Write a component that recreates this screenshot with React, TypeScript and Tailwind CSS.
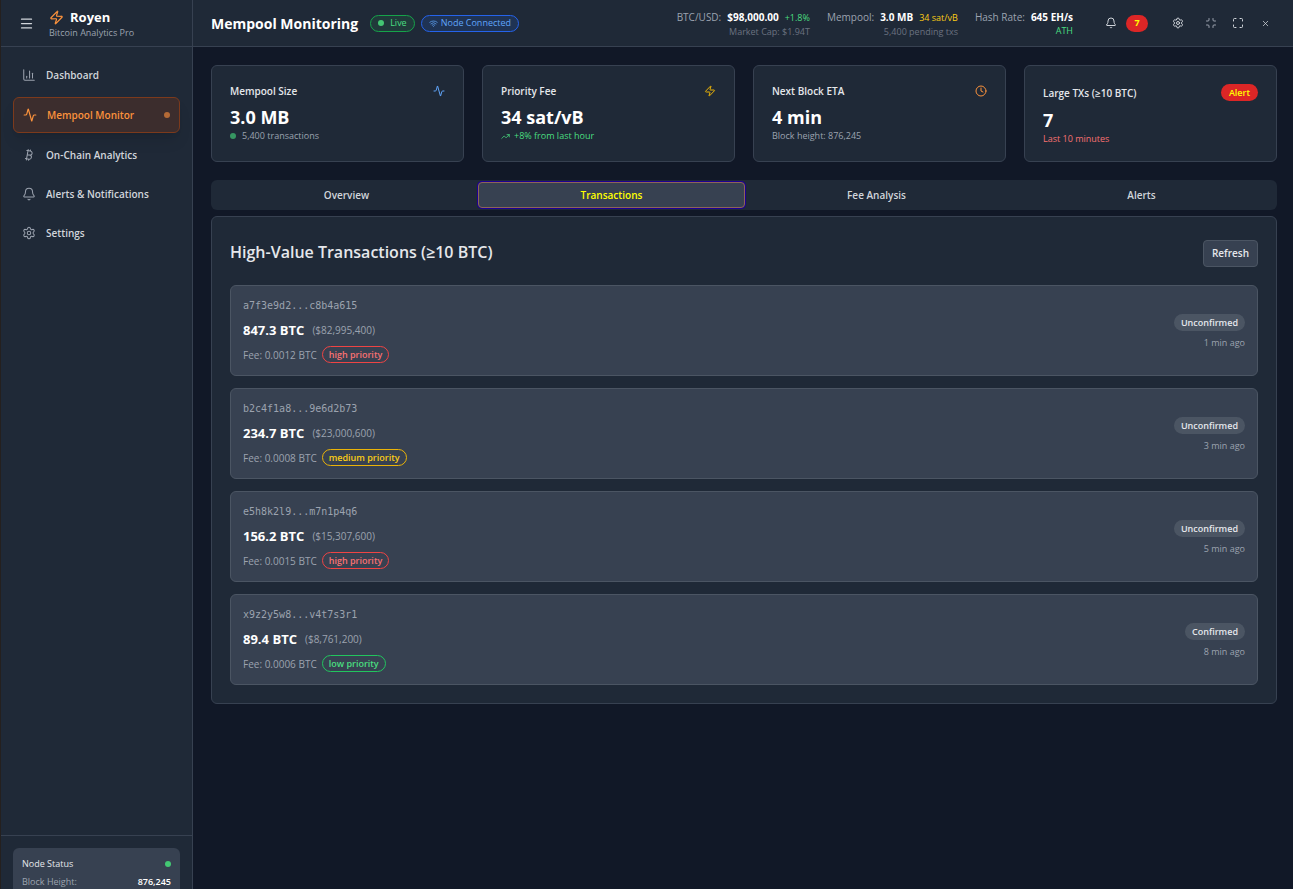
import type { ReactNode } from "react";
import {
  Activity,
  Bell,
  Bitcoin,
  ChartColumn,
  Clock,
  Maximize,
  Menu,
  Minimize,
  Settings,
  TrendingUp,
  Wifi,
  X,
  Zap,
  type LucideIcon,
} from "lucide-react";

const navItems: { label: string; icon: LucideIcon; active?: boolean }[] = [
  { label: "Dashboard", icon: ChartColumn },
  { label: "Mempool Monitor", icon: Activity, active: true },
  { label: "On-Chain Analytics", icon: Bitcoin },
  { label: "Alerts & Notifications", icon: Bell },
  { label: "Settings", icon: Settings },
];

const tabs = ["Overview", "Transactions", "Fee Analysis", "Alerts"];

type Priority = "high" | "medium" | "low";

const priorityStyles: Record<Priority, string> = {
  high: "border-[#ef4444] text-[#f87171]",
  medium: "border-[#eab308] text-[#facc15]",
  low: "border-[#22c55e] text-[#4ade80]",
};

const transactions: {
  hash: string;
  amount: string;
  usd: string;
  fee: string;
  priority: Priority;
  status: string;
  time: string;
}[] = [
  { hash: "a7f3e9d2...c8b4a615", amount: "847.3", usd: "82,995,400", fee: "0.0012", priority: "high", status: "Unconfirmed", time: "1 min ago" },
  { hash: "b2c4f1a8...9e6d2b73", amount: "234.7", usd: "23,000,600", fee: "0.0008", priority: "medium", status: "Unconfirmed", time: "3 min ago" },
  { hash: "e5h8k2l9...m7n1p4q6", amount: "156.2", usd: "15,307,600", fee: "0.0015", priority: "high", status: "Unconfirmed", time: "5 min ago" },
  { hash: "x9z2y5w8...v4t7s3r1", amount: "89.4", usd: "8,761,200", fee: "0.0006", priority: "low", status: "Confirmed", time: "8 min ago" },
];

function Sidebar() {
  return (
    <aside className="flex w-[193px] shrink-0 flex-col border-r border-l border-r-[#374151] border-l-[#24201f] bg-[#1f2937]">
      <div className="flex h-[47px] shrink-0 items-center gap-[15px] border-b border-[#374151] pl-[18px]">
        <button type="button" aria-label="Toggle sidebar" className="text-[#d1d5db]">
          <Menu size={15} strokeWidth={2} />
        </button>
        <div className="pt-0.5">
          <div className="flex items-center gap-1.5">
            <Zap size={15} className="text-[#fb923c]" />
            <span className="text-[13px] leading-[18px] font-bold text-white">Royen</span>
          </div>
          <p className="text-[9px] leading-[14px] text-[#9ca3af]">Bitcoin Analytics Pro</p>
        </div>
      </div>
      <nav className="flex flex-1 flex-col gap-[5px] px-3 pt-[11px]">
        {navItems.map(({ label, icon: Icon, active }) => (
          <a
            key={label}
            href="#"
            className={
              active
                ? "flex h-9 items-center gap-2.5 rounded-md border border-[#7c3a1c] bg-[#3c2d2d] px-[9px] text-[10px] font-semibold text-[#fb923c] shadow-lg"
                : "flex h-[34px] items-center gap-2.5 rounded-md px-[9px] text-[10px] font-semibold text-[#d1d5db]"
            }
          >
            <Icon size={14} strokeWidth={active ? 2 : 1.75} className={active ? "" : "text-[#9ca3af]"} />
            <span className="flex-1 whitespace-nowrap">{label}</span>
            {active && <span className="size-1.5 rounded-full bg-[#b46a36]" />}
          </a>
        ))}
      </nav>
      <div className="h-[54px] shrink-0 overflow-hidden border-t border-[#374151] px-3 pt-3">
        <div className="rounded-md bg-[#374151] px-[9px] pt-[9px] pb-4">
          <div className="flex items-center justify-between">
            <span className="text-[9px] leading-[14px] font-medium text-[#e5e7eb]">Node Status</span>
            <span className="size-1.5 rounded-full bg-[#43c873]" />
          </div>
          <div className="mt-1 flex items-center justify-between text-[9px] leading-[14px]">
            <span className="text-[#9ca3af]">Block Height:</span>
            <span className="font-semibold text-white">876,245</span>
          </div>
        </div>
      </div>
    </aside>
  );
}

function HeaderStat({
  label,
  value,
  extra,
  note,
  noteClass,
}: {
  label: string;
  value: string;
  extra?: ReactNode;
  note: string;
  noteClass: string;
}) {
  return (
    <div className="text-right">
      <div className="flex items-baseline justify-end gap-1.5 leading-4">
        <span className="text-[10px] text-[#9ca3af]">{label}</span>
        <span className="text-[10px] font-bold text-white">{value}</span>
        {extra}
      </div>
      <p className={noteClass}>{note}</p>
    </div>
  );
}

function Header() {
  return (
    <header className="flex h-[47px] shrink-0 items-center justify-between border-b border-[#374151] bg-[#1f2937] pr-[23px] pl-[18px] whitespace-nowrap">
      <div className="flex items-center">
        <h1 className="text-[14px] font-bold text-white">Mempool Monitoring</h1>
        <span className="ml-3 flex h-[17px] items-center gap-1.5 rounded-full border border-[#16a34a] bg-[#203a3a] px-[7px] text-[9px] font-medium text-[#4ade80]">
          <span className="size-1.5 rounded-full bg-[#43c873]" />
          Live
        </span>
        <span className="ml-1.5 flex h-[17px] items-center gap-[3px] rounded-full border border-[#2563eb] bg-[#1f3354] px-[7px] text-[9px] font-medium text-[#60a5fa]">
          <Wifi size={9} />
          Node Connected
        </span>
      </div>
      <div className="flex items-center">
        <div className="flex items-start gap-[17px]">
          <HeaderStat
            label="BTC/USD:"
            value="$98,000.00"
            extra={<span className="text-[9px] text-[#4ade80]">+1.8%</span>}
            note="Market Cap: $1.94T"
            noteClass="text-[9px] leading-3 text-[#6b7280]"
          />
          <HeaderStat
            label="Mempool:"
            value="3.0 MB"
            extra={<span className="text-[9px] text-[#facc15]">34 sat/vB</span>}
            note="5,400 pending txs"
            noteClass="text-[9px] leading-3 text-[#6b7280]"
          />
          <HeaderStat label="Hash Rate:" value="645 EH/s" note="ATH" noteClass="text-[9px] leading-3 text-[#4ade80]" />
        </div>
        <button type="button" aria-label="Notifications, 7 new" className="ml-8 flex items-center gap-[9px] text-[#d1d5db]">
          <Bell size={12} />
          <span className="flex h-[17px] w-[22px] items-center justify-center rounded-full bg-[#dc2626] text-[9px] font-bold text-[#ffff00]">
            7
          </span>
        </button>
        <button type="button" aria-label="Settings" className="ml-6 text-[#d1d5db]">
          <Settings size={12} />
        </button>
        <div className="ml-[21px] flex items-center gap-[15px] text-[#9ca3af]">
          <button type="button" aria-label="Minimize">
            <Minimize size={12} />
          </button>
          <button type="button" aria-label="Maximize" className="text-[#d1d5db]">
            <Maximize size={12} />
          </button>
          <button type="button" aria-label="Close" className="ml-0.5 text-[#d1d5db]">
            <X size={9} />
          </button>
        </div>
      </div>
    </header>
  );
}

function StatCard({ title, corner, value, children }: { title: string; corner: ReactNode; value: string; children: ReactNode }) {
  return (
    <section className="h-[97px] rounded-md border border-[#374151] bg-[#1f2937] px-[18px] pt-[18px]">
      <div className="flex items-center justify-between">
        <h2 className="text-[10px] leading-[14px] font-semibold text-[#e5e7eb]">{title}</h2>
        {corner}
      </div>
      <p className="mt-[7px] text-[18px] leading-6 font-bold text-white">{value}</p>
      <div className="flex items-center gap-1 text-[9px] leading-[14px]">{children}</div>
    </section>
  );
}

function TransactionRow({ tx }: { tx: (typeof transactions)[number] }) {
  return (
    <li className="flex h-[91px] items-center justify-between rounded-md border border-[#4b5563] bg-[#374151] px-3">
      <div>
        <p className="font-['DejaVu_Sans_Mono',monospace] text-[10px] leading-4 text-[#9ca3af]">{tx.hash}</p>
        <div className="mt-1.5 flex items-center gap-2 leading-5">
          <span className="text-[13px] font-bold text-white">{tx.amount} BTC</span>
          <span className="text-[10px] text-[#9ca3af]">(${tx.usd})</span>
        </div>
        <div className="mt-1.5 flex items-center gap-[5px]">
          <span className="text-[10px] leading-4 text-[#9ca3af]">Fee: {tx.fee} BTC</span>
          <span className={`flex h-[17px] items-center rounded-full border px-1.5 text-[9px] font-semibold ${priorityStyles[tx.priority]}`}>
            {tx.priority} priority
          </span>
        </div>
      </div>
      <div className="flex flex-col items-end gap-1 pt-1">
        <span className="flex h-[17px] items-center rounded-full bg-[#4b5563] px-[7px] text-[9px] font-semibold text-[#e5e7eb]">{tx.status}</span>
        <span className="text-[9px] leading-4 text-[#9ca3af]">{tx.time}</span>
      </div>
    </li>
  );
}

export default function App() {
  return (
    <div className="flex h-screen overflow-hidden bg-[#111827] font-['Open_Sans','Noto_Sans',sans-serif]">
      <Sidebar />
      <div className="flex min-w-0 flex-1 flex-col">
        <Header />
        <main className="flex-1 overflow-hidden pt-[18px] pr-4 pl-[18px]">
          <div className="grid grid-cols-4 gap-[18px]">
            <StatCard title="Mempool Size" value="3.0 MB" corner={<Activity size={12} className="text-[#60a5fa]" />}>
              <span className="mr-0.5 size-1.5 rounded-full bg-[#369662]" />
              <span className="text-[#9ca3af]">5,400 transactions</span>
            </StatCard>
            <StatCard title="Priority Fee" value="34 sat/vB" corner={<Zap size={12} className="text-[#eab308]" />}>
              <TrendingUp size={9} className="text-[#4ade80]" />
              <span className="text-[#4ade80]">+8% from last hour</span>
            </StatCard>
            <StatCard title="Next Block ETA" value="4 min" corner={<Clock size={12} className="text-[#fb923c]" />}>
              <span className="text-[#9ca3af]">Block height: 876,245</span>
            </StatCard>
            <StatCard
              title="Large TXs (≥10 BTC)"
              value="7"
              corner={
                <span className="flex h-[17px] items-center rounded-full bg-[#dc2626] px-2 text-[9px] font-semibold text-[#ffff00]">
                  Alert
                </span>
              }
            >
              <span className="text-[#f87171]">Last 10 minutes</span>
            </StatCard>
          </div>

          <div role="tablist" className="mt-[18px] grid h-[30px] grid-cols-4 items-center rounded-md bg-[#1f2937] px-[3px]">
            {tabs.map((tab) => (
              <button
                key={tab}
                type="button"
                role="tab"
                aria-selected={tab === "Transactions"}
                className={
                  tab === "Transactions"
                    ? "-mx-px h-[26px] rounded border border-[#8d6557] bg-[#374151] text-[10px] font-semibold text-[#ffff00] ring-1 ring-[#1c0095]"
                    : "h-[26px] text-[10px] font-semibold text-[#d1d5db]"
                }
              >
                {tab}
              </button>
            ))}
          </div>

          <section className="mt-1.5 rounded-md border border-[#374151] bg-[#1f2937] px-[18px] pt-[23px] pb-[18px]">
            <div className="flex h-[27px] items-start justify-between">
              <h2 className="text-[16px] leading-6 font-semibold text-[#e5e7eb]">High-Value Transactions (≥10 BTC)</h2>
              <button
                type="button"
                className="h-[27px] rounded border border-[#4b5563] bg-[#374151] px-2 text-[10px] font-semibold text-[#e5e7eb]"
              >
                Refresh
              </button>
            </div>
            <ul className="mt-[18px] flex flex-col gap-3">
              {transactions.map((tx) => (
                <TransactionRow key={tx.hash} tx={tx} />
              ))}
            </ul>
          </section>
        </main>
      </div>
    </div>
  );
}
